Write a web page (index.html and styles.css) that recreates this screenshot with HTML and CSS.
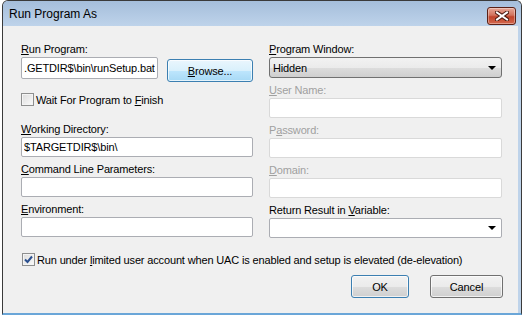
FILE: index.html
```html
<!DOCTYPE html>
<html lang="en">
<head>
  <meta charset="UTF-8" />
  <title>Run Program As</title>
  <link rel="stylesheet" href="styles.css">
</head>
<body>

  <div class="window">
    <div class="titlebar">
      <span class="title">Run Program As</span>
      <button class="close" type="button" aria-label="Close">
        <svg width="14" height="10" viewBox="0 0 14 10">
          <path d="M2 1.5 L12 8.5 M12 1.5 L2 8.5" stroke="#4a1a10" stroke-width="4" stroke-linecap="square"/>
          <path d="M2 1.5 L12 8.5 M12 1.5 L2 8.5" stroke="#fff" stroke-width="2" stroke-linecap="square"/>
        </svg>
      </button>
    </div>

    <div class="client">
      <div class="columns">
        <div class="col">
          <div class="field">
            <label><u>R</u>un Program:</label>
            <div class="row">
              <input class="text short" type="text" value=".GETDIR$\bin\runSetup.bat" readonly>
              <button class="btn browse" type="button"><u>B</u>rowse...</button>
            </div>
          </div>

          <label class="check wait">
            <span class="box"></span>
            <span>Wait For Program to <u>F</u>inish</span>
          </label>

          <div class="field after-check">
            <label><u>W</u>orking Directory:</label>
            <input class="text" type="text" value="$TARGETDIR$\bin\" readonly>
          </div>
          <div class="field">
            <label><u>C</u>ommand Line Parameters:</label>
            <input class="text" type="text">
          </div>
          <div class="field">
            <label><u>E</u>nvironment:</label>
            <input class="text" type="text">
          </div>
        </div>

        <div class="col">
          <div class="field">
            <label><u>P</u>rogram Window:</label>
            <div class="select">
              <span>Hidden</span>
              <span class="arrow"></span>
            </div>
          </div>
          <div class="field disabled">
            <label><u>U</u>ser Name:</label>
            <input class="text" type="text" disabled>
          </div>
          <div class="field disabled">
            <label>P<u>a</u>ssword:</label>
            <input class="text" type="password" disabled>
          </div>
          <div class="field disabled">
            <label><u>D</u>omain:</label>
            <input class="text" type="text" disabled>
          </div>
          <div class="field">
            <label>Return Result in <u>V</u>ariable:</label>
            <div class="combo">
              <span></span>
              <span class="arrow"></span>
            </div>
          </div>
        </div>
      </div>

      <label class="check uac">
        <span class="box checked">
          <svg width="9" height="9" viewBox="0 0 9 9">
            <path d="M1 4.5 L3.5 7 L8 1.5" fill="none" stroke="#2a4f8f" stroke-width="2"/>
          </svg>
        </span>
        <span>Run under <u>l</u>imited user account when UAC is enabled and setup is elevated (de-elevation)</span>
      </label>

      <div class="actions">
        <button class="btn ok" type="button">OK</button>
        <button class="btn cancel" type="button">Cancel</button>
      </div>
    </div>
  </div>

</body>
</html>
```

FILE: styles.css
```css
* {
  box-sizing: border-box;
}

body {
  margin: 0;
  padding: 0 0 0 2px;
  background: #fff;
  font-family: 'Liberation Sans', Arial, sans-serif;
  font-size: 11px;
  letter-spacing: -0.15px;
  color: #000;
}

.window {
  width: 520px;
  height: 315px;
  border: 1px solid #3a3a3a;
  border-bottom: 2px solid #6aa6d8;
  border-radius: 6px 6px 0 0;
  background: #bed3ea;
  display: flex;
  flex-direction: column;
}

.titlebar {
  height: 25px;
  display: flex;
  align-items: center;
  justify-content: space-between;
  padding: 0 5px 0 6px;
  background: linear-gradient(to bottom, #a5bedb, #bed3ea);
  border-radius: 5px 5px 0 0;
}

.title {
  font-size: 12px;
  letter-spacing: 0;
  margin-top: 1px;
}

.close {
  width: 29px;
  height: 18px;
  margin-top: 4px;
  padding: 0;
  border: 1px solid #5b2116;
  border-radius: 3px;
  background: linear-gradient(to bottom, #e7a897 0%, #d2735d 45%, #c0442b 55%, #d4674c 100%);
  display: flex;
  align-items: center;
  justify-content: center;
  box-shadow: inset 0 0 0 1px rgba(255, 255, 255, 0.35);
}

.client {
  flex: 1;
  margin-right: 3px;
  background: #f0f0f0;
  padding: 16px 0 0 18px;
}

.columns {
  display: flex;
  gap: 16px;
}

.col {
  display: flex;
  flex-direction: column;
}

.col:first-child {
  width: 232px;
}

.col:last-child {
  width: 233px;
}

.field {
  display: flex;
  flex-direction: column;
  gap: 1px;
  margin-bottom: 5px;
}

.field label {
  height: 14px;
  line-height: 14px;
}

.field.disabled label {
  color: #a0a0a0;
}

.row {
  display: flex;
  align-items: flex-start;
  gap: 9px;
}

.text {
  height: 20px;
  width: 100%;
  padding: 0 2px;
  border: 1px solid #abadb3;
  border-radius: 2px;
  background: #fff;
  font: inherit;
  letter-spacing: inherit;
  color: #000;
  outline: none;
}

.text:disabled {
  border-color: #d9d9d9;
  background: #fff;
}

.text.short {
  width: 137px;
  height: 22px;
  flex: none;
}

.btn {
  height: 23px;
  padding: 0;
  border: 1px solid #707070;
  border-radius: 3px;
  background: linear-gradient(to bottom, #f2f2f2 0%, #ebebeb 50%, #dddddd 51%, #cfcfcf 100%);
  box-shadow: inset 0 0 0 1px rgba(255, 255, 255, 0.7);
  font: inherit;
  letter-spacing: inherit;
  color: #000;
}

.browse {
  width: 86px;
  margin-top: 2px;
  border-color: #3c7fb1;
  background: linear-gradient(to bottom, #eaf6fd 0%, #d9f0fc 50%, #bee6fd 51%, #a7d9f5 100%);
}

.check {
  display: flex;
  align-items: center;
  gap: 2px;
  height: 17px;
}

.box {
  width: 13px;
  height: 13px;
  flex: none;
  border: 1px solid #8e8f8f;
  background: linear-gradient(to bottom right, #dcdcdc, #fbfbfb);
  box-shadow: inset 0 0 0 1px #f4f4f4;
  display: flex;
  align-items: center;
  justify-content: center;
}

.wait {
  margin-top: 4px;
}

.after-check {
  margin-top: 14px;
}

.select,
.combo {
  height: 21px;
  display: flex;
  align-items: center;
  justify-content: space-between;
  padding: 0 5px 0 3px;
  border: 1px solid #707070;
  border-radius: 3px;
  background: linear-gradient(to bottom, #f2f2f2 0%, #ebebeb 50%, #dddddd 51%, #cfcfcf 100%);
}

.combo {
  height: 20px;
  border-color: #abadb3;
  border-radius: 2px;
  background: #fff;
}

.arrow {
  width: 0;
  height: 0;
  border-left: 4px solid transparent;
  border-right: 4px solid transparent;
  border-top: 4px solid #000;
}

.uac {
  margin-top: 8px;
  margin-left: 1px;
}

.actions {
  display: flex;
  gap: 21px;
  margin: 7px 0 0 330px;
}

.ok {
  width: 58px;
  border-color: #3c7fb1;
}

.cancel {
  width: 73px;
}
```
